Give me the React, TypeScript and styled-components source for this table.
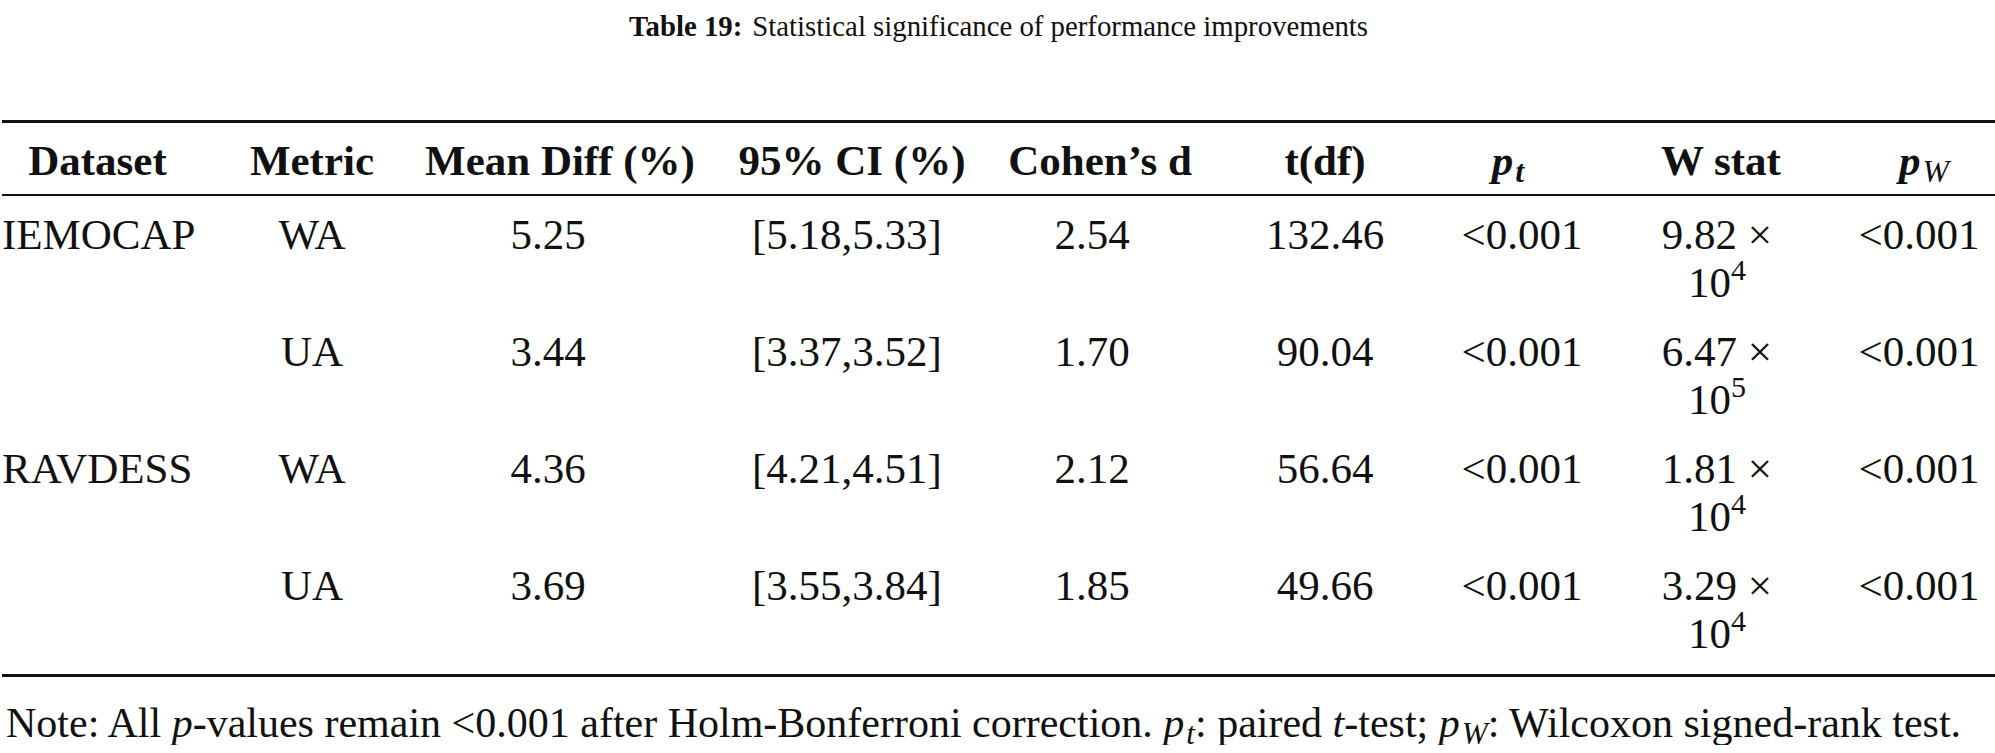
import React from "react";
import styled, { createGlobalStyle } from "styled-components";

const Global = createGlobalStyle`
  html, body { margin: 0; padding: 0; background: #ffffff; }
  body { font-family: "Liberation Serif", "Times New Roman", serif; color: #111111; }
`;

const Page = styled.div`
  display: flex;
  flex-direction: column;
  padding: 0 0 0 2px;
  width: 1993px;
`;

const Caption = styled.div`
  font-size: 28.8px;
  line-height: 36px;
  text-align: center;
  padding-top: 8px;
  height: 120px;
  box-sizing: border-box;
`;

const CaptionLabel = styled.b`
  font-weight: 700;
  margin-right: 10px;
`;

const Table = styled.div`
  display: grid;
  grid-template-columns: 203px 214px 282px 302px 194px 256px 138px 252px 152px;
  border-top: 3px solid #111;
  border-bottom: 3px solid #111;
  padding-bottom: 10px;
`;

const HeadCell = styled.div<{ $pad?: number }>`
  height: 73px;
  display: flex;
  align-items: center;
  justify-content: center;
  font-size: 43px;
  font-weight: 700;
  border-bottom: 2px solid #111;
  padding-top: 4px;
  box-sizing: border-box;
  padding-right: ${(p) => (p.$pad && p.$pad > 0 ? p.$pad : 0)}px;
  padding-left: ${(p) => (p.$pad && p.$pad < 0 ? -p.$pad : 0)}px;
  white-space: nowrap;
`;

const Cell = styled.div<{ $left?: boolean; $shift?: number }>`
  font-size: 43px;
  line-height: 48px;
  padding: 15px 0 6px;
  text-align: ${(p) => (p.$left ? "left" : "center")};
  padding-right: ${(p) => (p.$shift && p.$shift > 0 ? p.$shift : 0)}px;
  padding-left: ${(p) => (p.$shift && p.$shift < 0 ? -p.$shift : 0)}px;
`;

const Stat = styled.span`
  display: inline-block;
  max-width: 140px;
`;

const MathSym = styled.span`
  white-space: nowrap;
`;

const Sym = styled.i<{ $bold?: boolean }>`
  font-style: italic;
  font-weight: ${(p) => (p.$bold ? 700 : 400)};
`;

const Sub = styled.span<{ $bold?: boolean }>`
  font-size: 0.74em;
  font-style: italic;
  font-weight: ${(p) => (p.$bold ? 700 : 400)};
  vertical-align: -0.22em;
  line-height: 0;
  margin-left: 2px;
`;

const Sup = styled.span`
  position: relative;
  top: -0.55em;
  font-size: 0.7em;
  line-height: 0;
`;

const Note = styled.p`
  margin: 0;
  padding-top: 24px;
  font-size: 42px;
  line-height: 44px;
  padding-left: 4px;
  white-space: nowrap;
`;

type Row = {
  dataset: string;
  metric: string;
  mean: string;
  ci: string;
  d: string;
  t: string;
  pt: string;
  w: string;
  exp: string;
  pw: string;
};

const rows: Row[] = [
  { dataset: "IEMOCAP", metric: "WA", mean: "5.25", ci: "[5.18,5.33]", d: "2.54", t: "132.46", pt: "<0.001", w: "9.82", exp: "4", pw: "<0.001" },
  { dataset: "", metric: "UA", mean: "3.44", ci: "[3.37,3.52]", d: "1.70", t: "90.04", pt: "<0.001", w: "6.47", exp: "5", pw: "<0.001" },
  { dataset: "RAVDESS", metric: "WA", mean: "4.36", ci: "[4.21,4.51]", d: "2.12", t: "56.64", pt: "<0.001", w: "1.81", exp: "4", pw: "<0.001" },
  { dataset: "", metric: "UA", mean: "3.69", ci: "[3.55,3.84]", d: "1.85", t: "49.66", pt: "<0.001", w: "3.29", exp: "4", pw: "<0.001" },
];

export default function App() {
  return (
    <>
      <Global />
      <Page>
        <Caption>
          <CaptionLabel>Table 19:</CaptionLabel>
          Statistical significance of performance improvements
        </Caption>
        <Table>
          <HeadCell $pad={12}>Dataset</HeadCell>
          <HeadCell>Metric</HeadCell>
          <HeadCell>Mean Diff (%)</HeadCell>
          <HeadCell>95% CI (%)</HeadCell>
          <HeadCell>Cohen’s d</HeadCell>
          <HeadCell>t(df)</HeadCell>
          <HeadCell $pad={28}>
            <MathSym>
              <Sym $bold>p</Sym>
              <Sub $bold>t</Sub>
            </MathSym>
          </HeadCell>
          <HeadCell $pad={-8}>
            W stat
          </HeadCell>
          <HeadCell $pad={-10}>
            <MathSym>
              <Sym $bold>p</Sym>
              <Sub>W</Sub>
            </MathSym>
          </HeadCell>
          {rows.map((r, i) => (
            <React.Fragment key={i}>
              <Cell $left>{r.dataset}</Cell>
              <Cell>{r.metric}</Cell>
              <Cell $shift={24}>{r.mean}</Cell>
              <Cell $shift={10}>{r.ci}</Cell>
              <Cell $shift={16}>{r.d}</Cell>
              <Cell>{r.t}</Cell>
              <Cell>{r.pt}</Cell>
              <Cell>
                <Stat>
                  {r.w} × 10<Sup>{r.exp}</Sup>
                </Stat>
              </Cell>
              <Cell>{r.pw}</Cell>
            </React.Fragment>
          ))}
        </Table>
        <Note>
          Note: All <Sym>p</Sym>-values remain &lt;0.001 after Holm-Bonferroni correction.{" "}
          <MathSym>
            <Sym>p</Sym>
            <Sub>t</Sub>
          </MathSym>
          : paired <Sym>t</Sym>-test;{" "}
          <MathSym>
            <Sym>p</Sym>
            <Sub>W</Sub>
          </MathSym>
          : Wilcoxon signed-rank test.
        </Note>
      </Page>
    </>
  );
}
